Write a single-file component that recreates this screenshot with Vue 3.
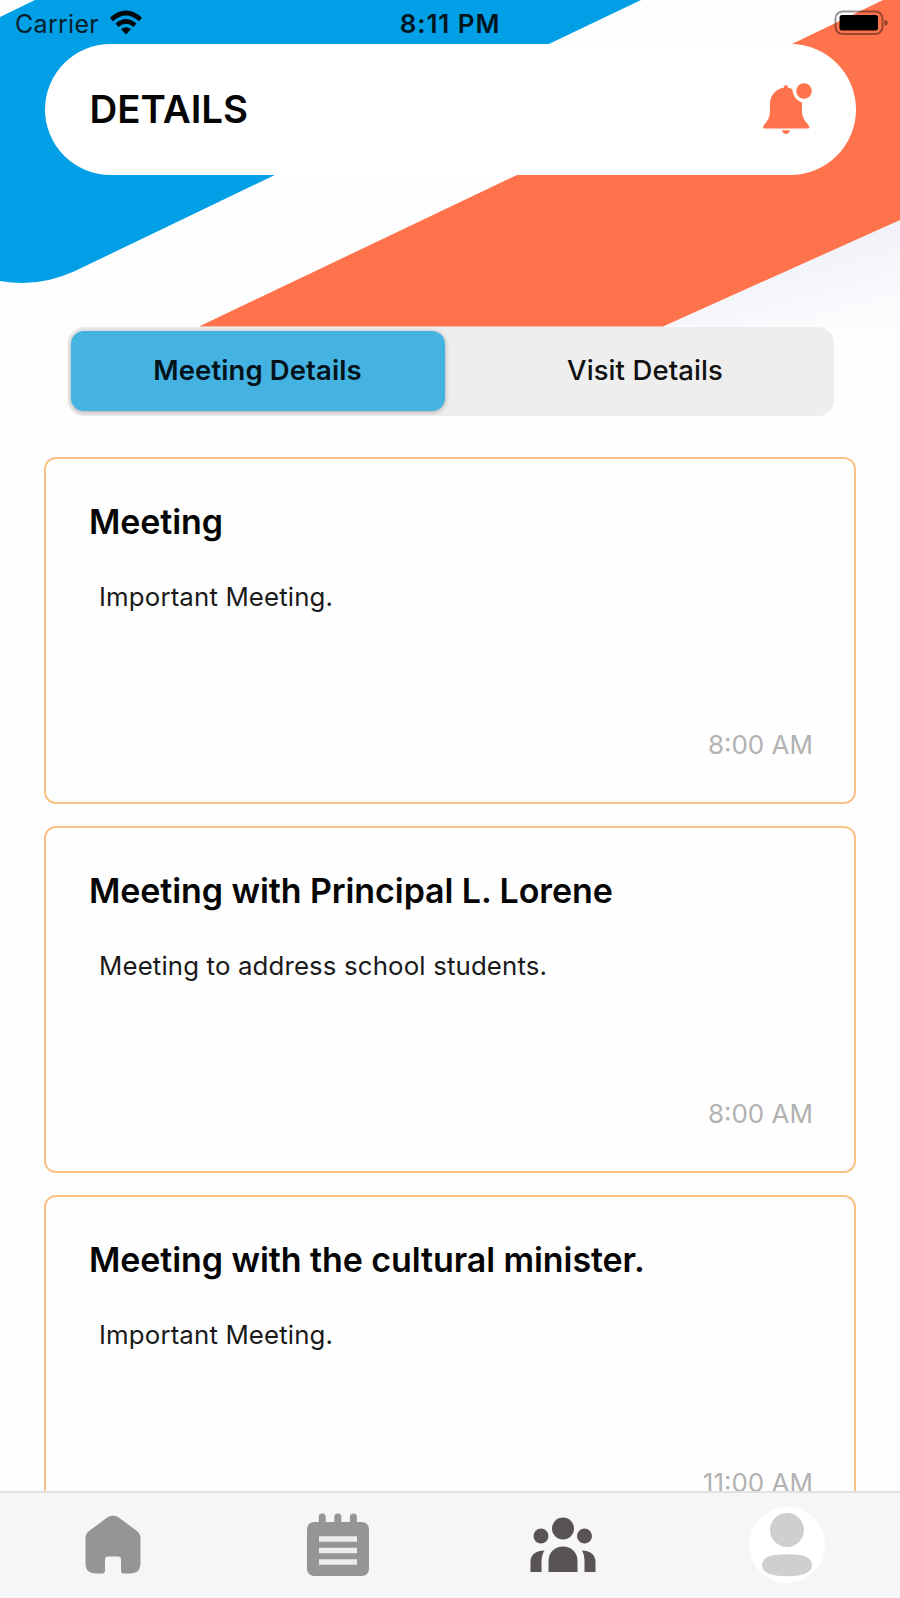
<template>
  <div class="screen">
    <header class="hero">
      <svg class="hero-bg" viewBox="0 0 900 327" aria-hidden="true">
        <defs>
          <linearGradient id="haze" x1="0" y1="0" x2="0.6" y2="1">
            <stop offset="0.2" stop-color="#eceef4" />
            <stop offset="1" stop-color="#fbfbfe" />
          </linearGradient>
        </defs>
        <path d="M900 219V326.500H663Z" fill="url(#haze)" />
        <path d="M0 17 35 0H641L277 174 75 271Q38 288 0 281Z" fill="#009fe6" />
        <path d="M883 0H900V220L663 326.500H199L519 174 792 44Z" fill="#ff734c" />
      </svg>

      <div class="status-bar">
        <div class="status-left">
          <span class="carrier">Carrier</span>
          <svg class="wifi" viewBox="0 0 34 26">
            <path d="M2.500 9.500Q17-3.500 31.500 9.500" />
            <path d="M8 15.300Q17 7.500 26 15.300" />
            <path class="wifi-dot" d="M12 19Q17 15.500 22 19L17 24.500Z" />
          </svg>
        </div>
        <span class="clock">8:11 PM</span>
        <svg class="battery" viewBox="0 0 56 26">
          <rect class="battery-shell" x="1.500" y="1.500" width="47" height="22.500" rx="7" />
          <rect x="5.500" y="5" width="38.500" height="15.500" rx="2.500" />
          <path class="battery-tip" d="M50.500 9.500Q54 11 54 12.800T50.500 16Z" />
        </svg>
      </div>

      <div class="title-bar">
        <h1 class="page-title">DETAILS</h1>
        <svg class="bell" viewBox="0 0 50 52">
          <path
            d="M21 4.500Q21 2 23 2T25 4.500Q27.500 5 29.500 6.500C29.500 12 33 17 39 19.500V29C39 34 42 38 45.500 42Q47.500 45.500 45 45.500H1.500Q-1 45.500 1 42C4.500 38 7 34 7 29V21C7 12 13 6 21 4.500Z"
          />
          <path d="M18.800 47.300H27Q26 51 23 51T18.800 47.300Z" />
          <circle cx="41" cy="8" r="7.800" />
        </svg>
      </div>
    </header>

    <div class="tabs">
      <button
        v-for="tab in tabs"
        :key="tab"
        class="tab"
        :class="{ active: tab === activeTab }"
        @click="activeTab = tab"
      >
        <span>{{ tab }}</span>
      </button>
    </div>

    <main class="list">
      <article v-for="(item, index) in meetings" :key="index" class="card">
        <h2 class="card-title">{{ item.title }}</h2>
        <p class="card-text">{{ item.text }}</p>
        <time class="card-time">{{ item.time }}</time>
      </article>
    </main>

    <nav class="nav">
      <a href="#" class="nav-item">
        <svg class="icon-home" viewBox="0 0 56 60">
          <path
            d="M23 2Q28-1 33 2L52 16Q55.500 19 55.500 23V48Q55.500 58.500 45 58.500H39Q36 58.500 36 55.500V44.500Q36 41.500 33 41.500H23Q20 41.500 20 44.500V55.500Q20 58.500 17 58.500H11Q.500 58.500 .500 48V23Q.500 19 4 16Z"
          />
        </svg>
      </a>
      <a href="#" class="nav-item">
        <svg class="icon-notes" viewBox="0 0 64 64">
          <rect x="1" y="9" width="62" height="54" rx="7" />
          <path class="notes-rings" d="M16.200 4V12M31.800 4V12M47.400 4V12" />
          <path class="notes-lines" d="M13 26H51M13 37.500H51M13 49H51" />
        </svg>
      </a>
      <a href="#" class="nav-item">
        <svg class="icon-people" viewBox="0 0 66 56">
          <circle cx="33" cy="11.500" r="11" />
          <circle cx="11" cy="19" r="7.500" />
          <circle cx="54.500" cy="19" r="7.500" />
          <path d="M18.500 55V44C18.500 35 25 29.500 33 29.500S47.500 35 47.500 44V55Z" />
          <path d="M.5 55V45C.5 37.500 6 33.500 14.500 33.500Q11.500 38 11.500 45V55Z" />
          <path d="M65.500 55V45C65.500 37.500 60 33.500 52 33.500Q54.500 38 54.500 45V55Z" />
        </svg>
      </a>
      <a href="#" class="nav-item">
        <svg class="icon-user" viewBox="0 0 76 76">
          <circle class="user-bg" cx="38" cy="38" r="38" />
          <circle cx="38" cy="23" r="17" />
          <path d="M26 48Q38 46.500 50 48C59 48.500 63 53.500 63 58.500C63 63.500 58 67 50 68.500Q38 70 26 68.500C18 67 13 63.500 13 58.500C13 53.500 17 48.500 26 48Z" />
        </svg>
      </a>
    </nav>
  </div>
</template>

<script setup>
import { ref } from 'vue'

const tabs = ['Meeting Details', 'Visit Details']
const activeTab = ref('Meeting Details')

const meetings = [
  { title: 'Meeting', text: 'Important Meeting.', time: '8:00 AM' },
  {
    title: 'Meeting with Principal L. Lorene',
    text: 'Meeting to address school students.',
    time: '8:00 AM'
  },
  {
    title: 'Meeting with the cultural minister.',
    text: 'Important Meeting.',
    time: '11:00 AM'
  }
]
</script>

<style>
body {
  margin: 0;
  background: #fff;
}
</style>

<style scoped>
.screen {
  display: flex;
  flex-direction: column;
  width: 900px;
  height: 1598px;
  overflow: hidden;
  background: #fefefe;
  color: #050505;
  font-family: Inter, 'Liberation Sans', sans-serif;
}

.hero {
  position: relative;
  flex: none;
  height: 327px;
}

/* diagonal stripes behind the status bar and the title */
.hero-bg {
  position: absolute;
  inset: 0;
  width: 900px;
  height: 327px;
}

.status-bar {
  position: relative;
  display: grid;
  grid-template-columns: 1fr auto 1fr;
  align-items: center;
  height: 44px;
  padding: 4px 10px 0 15px;
  box-sizing: border-box;
}

.status-left {
  display: flex;
  align-items: center;
  gap: 10px;
}

.carrier,
.clock {
  font-size: 25px;
  line-height: 30px;
  color: #06202c;
}

.carrier {
  letter-spacing: 0.3px;
}

.clock {
  margin-left: -5px;
  font-size: 26px;
  font-weight: 600;
  letter-spacing: 0.9px;
  color: #03151d;
}

.wifi {
  width: 34px;
  height: 26px;
  margin-top: -3px;
  fill: none;
  stroke: #02090c;
  stroke-width: 4.6;
}

.wifi-dot {
  fill: #02090c;
  stroke: none;
}

.battery {
  justify-self: end;
  width: 56px;
  height: 26px;
  margin-top: -3px;
}

.battery-shell {
  fill: none;
  stroke: rgba(0, 0, 0, 0.4);
  stroke-width: 2;
}

.battery-tip {
  fill: rgba(0, 0, 0, 0.45);
}

.title-bar {
  position: relative;
  display: flex;
  align-items: center;
  justify-content: space-between;
  height: 130.5px;
  margin: 0 44px 0 44.5px;
  padding: 0 43px 0 45px;
  box-sizing: border-box;
  border-radius: 66px;
  background: #fff;
}

.page-title {
  margin: 0;
  font-size: 38.5px;
  font-weight: 600;
  letter-spacing: 0;
}

.bell {
  width: 50px;
  height: 52px;
  overflow: visible;
  fill: #ff734c;
}

.tabs {
  display: grid;
  grid-template-columns: 374px 1fr;
  flex: none;
  gap: 15px;
  width: 766px;
  height: 88.5px;
  margin: 0 auto;
  padding: 4px 3px 5px;
  box-sizing: border-box;
  border-radius: 16px;
  background: #eee;
  position: relative;
  left: 0.5px;
}

.tab {
  padding: 0 0 1px;
  border: 0;
  border-radius: 13px;
  background: none;
  color: #111;
  font-family: inherit;
  font-size: 27.5px;
  font-weight: 500;
  letter-spacing: 0.1px;
}

.tab.active {
  background: #44b3e1;
  color: #041219;
  font-weight: 600;
  box-shadow: 0 1px 5px rgba(0, 0, 0, 0.3);
}

.list {
  display: flex;
  flex: 1;
  flex-direction: column;
  gap: 22px;
  min-height: 0;
  padding: 41px 44px 0;
  overflow: hidden;
}

.card {
  display: flex;
  flex: none;
  flex-direction: column;
  height: 347px;
  padding: 41px 41px 40px 43px;
  box-sizing: border-box;
  border: 2.4px solid #fbc288;
  border-radius: 12px;
}

.card-title {
  margin: 0;
  font-size: 34px;
  font-weight: 600;
  line-height: 44px;
  letter-spacing: -0.08px;
}

.card-text {
  margin: 36px 0 0 10px;
  font-size: 25.8px;
  line-height: 34px;
  letter-spacing: 0.15px;
  color: #1a1a1a;
}

.card-time {
  margin-top: auto;
  text-align: right;
  font-size: 26px;
  line-height: 34px;
  color: #b2b2b2;
}

.nav {
  display: grid;
  flex: none;
  grid-template-columns: repeat(4, 1fr);
  height: 107px;
  box-sizing: border-box;
  border-top: 2px solid #e2e2e2;
  background: #f6f6f6;
}

.nav-item {
  display: flex;
  align-items: center;
  justify-content: center;
  padding-bottom: 1px;
  fill: #959595;
}

.icon-home {
  width: 56px;
  height: 60px;
  margin-left: 1px;
}

.icon-notes {
  width: 64px;
  height: 64px;
}

.notes-rings {
  stroke: #959595;
  stroke-width: 7;
  stroke-linecap: round;
}

.notes-lines {
  stroke: #ececec;
  stroke-width: 5.6;
}

.icon-people {
  width: 66px;
  height: 56px;
  margin-left: 1px;
  fill: #595453;
}

.icon-user {
  width: 76px;
  height: 76px;
  margin-right: 2px;
  fill: #d0cfd0;
}

.user-bg {
  fill: #fff;
}
</style>
